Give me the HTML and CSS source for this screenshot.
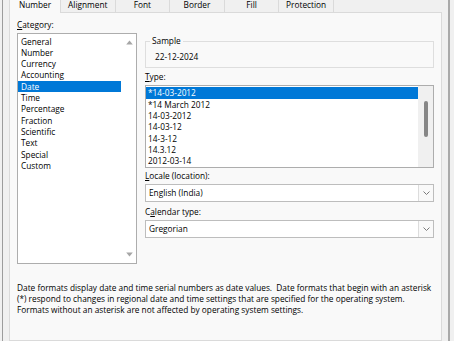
FILE: index.html
```html
<!DOCTYPE html>
<html>
<head>
<meta charset="utf-8">
<link rel="stylesheet" href="styles.css">
</head>
<body>
<div class="frame">
  <div class="tabs">
    <div class="tab active">Number</div>
    <div class="tab">Alignment</div>
    <div class="tab">Font</div>
    <div class="tab">Border</div>
    <div class="tab">Fill</div>
    <div class="tab">Protection</div>
  </div>
  <div class="page">
    <div class="top">
      <div class="left">
        <div class="label"><u>C</u>ategory:</div>
        <div class="listbox catlist">
          <div class="items">
            <div class="item">General</div>
            <div class="item">Number</div>
            <div class="item">Currency</div>
            <div class="item">Accounting</div>
            <div class="item selected">Date</div>
            <div class="item">Time</div>
            <div class="item">Percentage</div>
            <div class="item">Fraction</div>
            <div class="item">Scientific</div>
            <div class="item">Text</div>
            <div class="item">Special</div>
            <div class="item">Custom</div>
          </div>
          <div class="cat-scroll">
            <svg class="arrow" width="7" height="5" viewBox="0 0 7 5"><path d="M3.5 0.5 L6.8 4.5 L0.2 4.5 Z" fill="#a6a6a6"/></svg>
            <svg class="arrow" width="7" height="5" viewBox="0 0 7 5"><path d="M0.2 0.5 L6.8 0.5 L3.5 4.5 Z" fill="#a6a6a6"/></svg>
          </div>
        </div>
      </div>
      <div class="right">
        <fieldset class="sample">
          <legend>Sample</legend>
          <div class="sample-val">22-12-2024</div>
        </fieldset>
        <div class="label type-label"><u>T</u>ype:</div>
        <div class="listbox typelist">
          <div class="items">
            <div class="item selected">*14-03-2012</div>
            <div class="item">*14 March 2012</div>
            <div class="item">14-03-2012</div>
            <div class="item">14-03-12</div>
            <div class="item">14-3-12</div>
            <div class="item">14.3.12</div>
            <div class="item">2012-03-14</div>
          </div>
          <div class="track"><div class="thumb"></div></div>
        </div>
        <div class="label locale-label"><u>L</u>ocale (location):</div>
        <div class="combo">
          <span class="combo-text">English (India)</span>
          <div class="combo-btn"><svg width="7" height="4" viewBox="0 0 7 4"><path d="M0.5 0.5 L3.5 3.5 L6.5 0.5" fill="none" stroke="#7a7a7a" stroke-width="1"/></svg></div>
        </div>
        <div class="label cal-label">C<u>a</u>lendar type:</div>
        <div class="combo">
          <span class="combo-text">Gregorian</span>
          <div class="combo-btn"><svg width="7" height="4" viewBox="0 0 7 4"><path d="M0.5 0.5 L3.5 3.5 L6.5 0.5" fill="none" stroke="#7a7a7a" stroke-width="1"/></svg></div>
        </div>
      </div>
    </div>
    <p class="desc">Date formats display date and time serial numbers as date values.&nbsp; Date formats that begin with an asterisk<br>(*) respond to changes in regional date and time settings that are specified for the operating system.<br>Formats without an asterisk are not affected by operating system settings.</p>
  </div>
</div>
</body>
</html>
```

FILE: styles.css
```css
html, body {
  margin: 0;
  padding: 0;
  width: 454px;
  height: 341px;
  overflow: hidden;
  background: #f0f0f0;
  font-family: "Open Sans", "Noto Sans", sans-serif;
  font-size: 8.3px;
  color: #000;
}

.frame {
  box-sizing: border-box;
  margin-left: 2px;
  width: 448px;
  height: 341px;
  border-left: 1px solid #9c9c9c;
  border-right: 2px solid #a9a9a9;
  padding: 0 6px;
  display: flex;
  flex-direction: column;
}

.tabs {
  display: flex;
  height: 12px;
  flex: none;
}

.tab {
  box-sizing: border-box;
  width: 54.6px;
  height: 12px;
  line-height: 10px;
  text-align: center;
  border-right: 1px solid #dadada;
  background: #f0f0f0;
}

.tab.active {
  width: 52px;
  border-left: 1px solid #dadada;
  background: #f9f9f9;
  height: 13px;
  position: relative;
  z-index: 1;
}

.page {
  box-sizing: border-box;
  flex: 1;
  border: 1px solid #dadada;
  background: #f9f9f9;
  padding: 0 7px;
}

.top {
  display: grid;
  grid-template-columns: 120px 289px;
  column-gap: 8px;
  padding-top: 6px;
}

.label {
  line-height: 12px;
  height: 12px;
  white-space: nowrap;
}

.label u {
  text-decoration-thickness: 1px;
  text-underline-offset: 1px;
}

.listbox {
  box-sizing: border-box;
  border: 1px solid #adadad;
  background: #fff;
  display: flex;
  margin-top: 2px;
}

.items {
  flex: 1;
  min-width: 0;
}

.item {
  height: 11.33px;
  line-height: 11.33px;
  white-space: nowrap;
}

.item.selected {
  background: #0078d7;
  color: #fff;
}

.catlist {
  height: 231px;
}

.catlist .items {
  padding-top: 1.5px;
}

.catlist .item {
  padding-left: 3px;
}

.cat-scroll {
  width: 15px;
  flex: none;
  display: flex;
  flex-direction: column;
  justify-content: space-between;
  align-items: center;
  padding: 6px 0 6px 0;
}

.arrow {
  display: block;
  margin-left: 2px;
}

.sample {
  margin: 16px 0 0 0;
  padding: 0 8px 4px 4px;
  border: 1px solid #dedede;
  min-inline-size: 0;
}

.sample legend {
  padding: 0 2px;
  line-height: 12px;
}

.sample-val {
  margin: 4px 0 0 5px;
  line-height: 12px;
}

.type-label {
  margin-top: 3px;
}

.typelist {
  height: 83px;
}

.typelist .items {
  padding-top: 1.3px;
}

.typelist .item {
  padding-left: 2px;
  height: 11.33px;
}

.track {
  width: 15px;
  flex: none;
  background: #f0f0f0;
}

.thumb {
  width: 4px;
  height: 36px;
  margin: 14.7px 0 0 6px;
  background: #868686;
  border-radius: 2px;
}

.locale-label {
  margin-top: 2px;
}

.cal-label {
  margin-top: 4px;
}

.combo {
  box-sizing: border-box;
  height: 18px;
  margin-top: 2px;
  border: 1px solid #bdbdbd;
  background: #fff;
  display: flex;
  align-items: stretch;
}

.combo-text {
  flex: 1;
  padding-left: 3px;
  line-height: 16px;
}

.combo-btn {
  width: 14px;
  border-left: 1px solid #dcdcdc;
  background: #f9f9f9;
  display: flex;
  align-items: center;
  justify-content: center;
}

.combo-btn svg {
  display: block;
}

.desc {
  margin: 17.6px 0 0 0;
  line-height: 11.33px;
  white-space: nowrap;
}
```
